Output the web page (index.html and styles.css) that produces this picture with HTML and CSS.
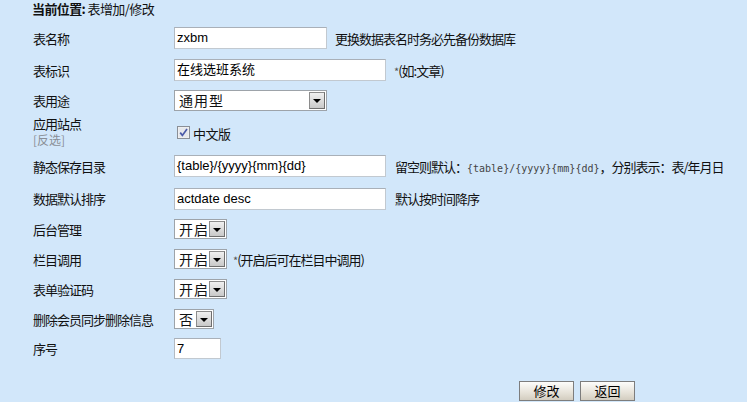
FILE: index.html
```html
<!DOCTYPE html>
<html lang="zh-CN">
<head>
<meta charset="utf-8">
<title>表增加/修改</title>
<link rel="stylesheet" href="styles.css">
</head>
<body>
<div class="page">
  <div class="crumb"><b>当前位置:</b> 表增加/修改</div>
  <div class="form">
    <div class="row r1">
      <div class="label">表名称</div>
      <div class="field"><span class="input w153">zxbm</span><span class="hint">更换数据表名时务必先备份数据库</span></div>
    </div>
    <div class="row r2">
      <div class="label">表标识</div>
      <div class="field"><span class="input w212">在线选班系统</span><span class="hint"><span class="star">*</span>(如:文章)</span></div>
    </div>
    <div class="row r3">
      <div class="label">表用途</div>
      <div class="field"><span class="sel w153"><span class="sel-val">通用型</span><span class="sel-btn"></span></span></div>
    </div>
    <div class="row r4">
      <div class="label"><span>应用站点</span><span class="sub">[反选]</span></div>
      <div class="field"><span class="check"><svg width="13" height="13" viewBox="0 0 13 13"><rect x="0.5" y="0.5" width="12" height="12" fill="#f4f4f4" stroke="#8a8f96"/><rect x="1.5" y="1.5" width="10" height="10" fill="#e6e8ec"/><path d="M3.2 6.6 L5.4 9.4 L10 3" fill="none" stroke="#4a5aa8" stroke-width="1.7"/></svg></span><span class="cb-text">中文版</span></div>
    </div>
    <div class="row r5">
      <div class="label">静态保存目录</div>
      <div class="field"><span class="input w212">{table}/{yyyy}{mm}{dd}</span><span class="hint hint-far">留空则默认：<span class="mono">{table}/{yyyy}{mm}{dd}</span>，分别表示：表/年月日</span></div>
    </div>
    <div class="row r6">
      <div class="label">数据默认排序</div>
      <div class="field"><span class="input w212">actdate desc</span><span class="hint hint-far">默认按时间降序</span></div>
    </div>
    <div class="row r7">
      <div class="label">后台管理</div>
      <div class="field"><span class="sel w52"><span class="sel-val">开启</span><span class="sel-btn"></span></span></div>
    </div>
    <div class="row r8">
      <div class="label">栏目调用</div>
      <div class="field"><span class="sel w52"><span class="sel-val">开启</span><span class="sel-btn"></span></span><span class="hint hint-near"><span class="star">*</span>(开启后可在栏目中调用)</span></div>
    </div>
    <div class="row r9">
      <div class="label">表单验证码</div>
      <div class="field"><span class="sel w52"><span class="sel-val">开启</span><span class="sel-btn"></span></span></div>
    </div>
    <div class="row r10">
      <div class="label">删除会员同步删除信息</div>
      <div class="field"><span class="sel w39"><span class="sel-val">否</span><span class="sel-btn"></span></span></div>
    </div>
    <div class="row r11">
      <div class="label">序号</div>
      <div class="field"><span class="input w47 small">7</span></div>
    </div>
  </div>
  <div class="actions">
    <span class="btn">修改</span>
    <span class="btn">返回</span>
  </div>
</div>
</body>
</html>
```

FILE: styles.css
```css
html, body {
  margin: 0;
  padding: 0;
  background: #d2e7fa;
  height: 100%;
}
body {
  font-family: "Liberation Sans", "Noto Sans CJK SC", sans-serif;
  font-size: 12px;
  color: #111;
  overflow: hidden;
}
.page {
  padding-left: 33px;
}
.crumb {
  height: 18px;
  line-height: 18px;
  font-family: "Noto Sans CJK SC", sans-serif;
  font-size: 13px;
  letter-spacing: -0.6px;
  margin-left: -1px;
  margin-bottom: 4px;
}
.crumb b {
  font-weight: 700;
}
.form {
  display: flex;
  flex-direction: column;
}
.row {
  display: flex;
  align-items: center;
}
.r1 { height: 32px; }
.r2 { height: 32px; }
.r3 { height: 29px; }
.r4 { height: 34px; }
.r5 { height: 34px; }
.r6 { height: 31px; }
.r7 { height: 30px; }
.r8 { height: 30px; }
.r9 { height: 30px; }
.r10 { height: 30px; }
.r11 { height: 29px; }
.label {
  width: 141px;
  flex: none;
  font-family: "Noto Sans CJK SC", sans-serif;
  font-size: 13px;
  letter-spacing: -1px;
  line-height: 15px;
  display: flex;
  flex-direction: column;
}
.label .sub {
  color: #8a8f96;
  font-size: 12px;
  letter-spacing: 0;
  line-height: 17px;
}
.r4 .label {
  margin-top: -1px;
}
.field {
  display: flex;
  align-items: center;
}
.input {
  box-sizing: border-box;
  height: 22px;
  background: #fff;
  border: 1px solid #c2c9d0;
  border-top-color: #a9b0b8;
  border-left-color: #b3bac2;
  font-size: 13px;
  line-height: 20px;
  padding-left: 2px;
  color: #000;
  white-space: nowrap;
  overflow: hidden;
}
.input.small { height: 21px; }
.w153 { width: 153px; }
.w212 { width: 212px; }
.w52 { width: 53px; }
.w39 { width: 40px; }
.w47 { width: 47px; }
.hint {
  font-family: "Noto Sans CJK SC", sans-serif;
  font-size: 13px;
  letter-spacing: -1px;
  margin-left: 8px;
  white-space: nowrap;
}
.hint-far { margin-left: 9px; }
.hint-near { margin-left: 6px; }
.star {
  color: #555;
  font-size: 11px;
}
.mono {
  font-family: "DejaVu Sans Mono", "Liberation Mono", monospace;
  font-size: 10px;
  letter-spacing: 0;
  color: #444;
}
.sel {
  box-sizing: border-box;
  display: flex;
  height: 20px;
  background: #fff;
  border: 1px solid #9da3a9;
  padding: 1px;
}
.sel.w153 { height: 21px; }
.sel-val {
  flex: 1;
  font-family: "Noto Sans CJK SC", sans-serif;
  font-size: 14px;
  line-height: 16px;
  padding-left: 3px;
  letter-spacing: 1px;
  white-space: nowrap;
}
.sel-btn {
  flex: none;
  width: 16px;
  box-sizing: border-box;
  border: 1px solid #8c8c8c;
  border-right-color: #6e6e6e;
  border-bottom-color: #6e6e6e;
  background: linear-gradient(#f0f0f0, #c9c9c9);
  position: relative;
}
.sel-btn::after {
  content: "";
  position: absolute;
  left: 3px;
  top: 6px;
  border-left: 4px solid transparent;
  border-right: 4px solid transparent;
  border-top: 4px solid #000;
}
.check {
  display: flex;
  margin-left: 3px;
  margin-top: 1px;
}
.cb-text {
  font-family: "Noto Sans CJK SC", sans-serif;
  font-size: 13px;
  letter-spacing: -0.5px;
  margin-left: 3px;
  margin-top: 3px;
}
.actions {
  display: flex;
  gap: 6px;
  margin-left: 486px;
  margin-top: 18px;
}
.btn {
  box-sizing: border-box;
  width: 55px;
  height: 20px;
  border: 1px solid #7d7d7d;
  background: linear-gradient(#fdfdfb, #e6e2d8 60%, #d3cdc0);
  font-family: "Noto Sans CJK SC", sans-serif;
  font-size: 13px;
  line-height: 18px;
  text-align: center;
  color: #000;
}
```
